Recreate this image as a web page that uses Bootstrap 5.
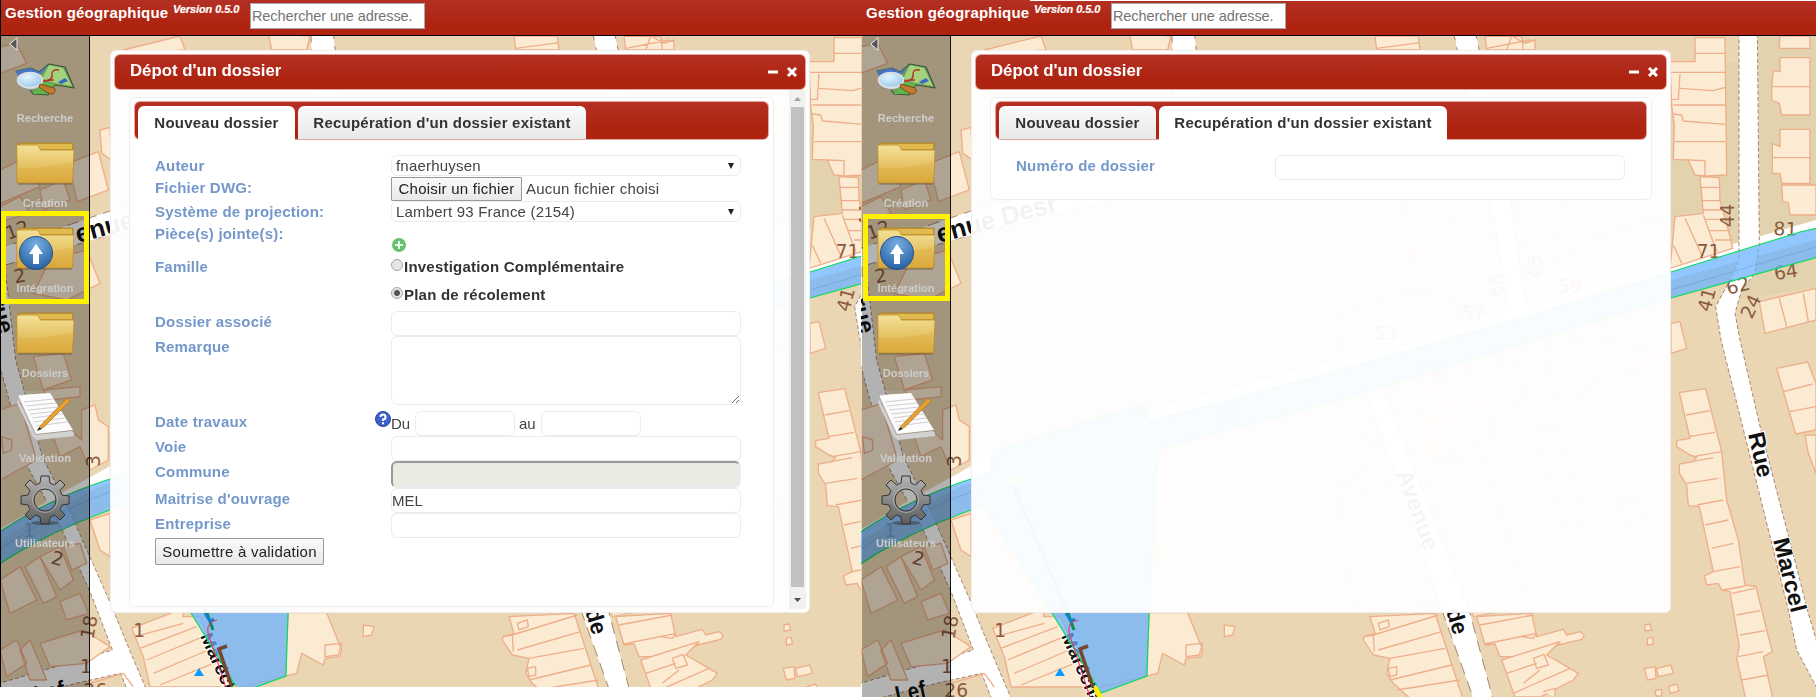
<!DOCTYPE html>
<html lang="fr">
<head>
<meta charset="utf-8">
<title>Gestion géographique</title>
<link rel="stylesheet" href="https://cdn.jsdelivr.net/npm/bootstrap@5.3.0/dist/css/bootstrap.min.css">
<style>
body{font-family:"Liberation Sans",Arial,sans-serif;font-size:15px;line-height:20px;color:#444;background:#fff;width:1816px;height:697px;overflow:hidden}
.pane{overflow:hidden;width:861px;height:687px;background:#ead6b2}
.pane-left{border-left:1px solid #000}
.pane-right{width:955px;height:697px}
.pane-left .maplayer{left:-1px}
.maplayer{top:0;left:0;z-index:0}
.topbar{height:36px;border-bottom:1px solid #000;background:linear-gradient(#b43024,#ae2410 70%);color:#fff;padding-left:4px;z-index:1}
.pane-right .topbar{padding-left:5px}
.whiteline{height:1px;top:0;left:169px;right:0;background:#fff}
.appname{font-weight:bold;font-size:15px;line-height:26px;width:168px;white-space:nowrap;letter-spacing:.21px}
.version{font-weight:bold;font-style:italic;font-size:11px;line-height:18px;width:77px;white-space:nowrap;letter-spacing:-.1px;-webkit-text-stroke:.2px #fff}
.addr{width:175px;height:26px;margin-top:3px;border:1px solid #a9a9a9;padding:0 1px;font-size:14.5px;letter-spacing:-.1px;background:#fff;outline:0}
.addr::placeholder{color:#757575}
.side{width:89px;border-right:1px solid #111;background:rgba(0,0,0,.3);margin-top:-1px;padding-top:2px}
.pane-right .side{margin-left:1px}
.tool{height:85px;text-align:center;color:#ccc;font-weight:bold;font-size:11px;line-height:14px}
.tool svg{display:block;margin:0 auto}
.caption{margin-top:10px}
.collapser{height:13px;padding-left:8px}
.marker{border:5px solid #fff200;left:0;width:88px;top:211px;height:93px;z-index:3}
.pane-right .marker{left:2px;width:87px;top:214px;height:87px}
.dlg{width:700px;height:563px;margin:14px 0 0 20px;border:1px solid #eee;border-radius:6px;background:rgba(255,255,255,.95);padding:3px}
.dlg-title{height:36px;border:1px solid #e0a7a0;border-radius:6px;background:linear-gradient(#b43024,#ae2410 70%);color:#fff;font-weight:bold;font-size:16.8px;padding:0 8px 0 15px}
.pane-left .dlg-card{width:645px;height:510px}
.dlg-card{margin:7px 0 0 15px;width:662px;height:103px;border:1px solid #eee;border-radius:6px;background:rgba(255,255,255,.97);padding:3px 4px}
.tabstrip{height:39px;border:1px solid #e0a7a0;border-radius:6px;background:linear-gradient(#b43024,#ae2410 70%);padding:4px 0 0 3px;gap:3px}
.tabitem{height:33px;border-radius:6px 6px 0 0;font-weight:bold;letter-spacing:.23px;line-height:33px;text-align:center;white-space:nowrap;background:linear-gradient(#fafafa,#e9e9e9);color:#333}
.tabitem.on{background:#fff;height:35px}
.t1{width:157px}.t2{width:288px}
.formarea{padding:15px 21px 0}
.line{display:flex}
.lab{width:236px;color:#7598ca;font-weight:bold;letter-spacing:.19px;line-height:21px;white-space:nowrap}
.fld{width:350px;height:25px;border:1px solid #ececec;border-radius:6px;background:#fff;padding:0;color:#444;line-height:23px;outline:0;display:block}
.pick{height:21px;line-height:20px;padding:0 5px 0 4px;display:flex;justify-content:space-between;letter-spacing:.2px}
.h22{height:22px}.h24{height:24px}.h25{height:25px}.h27{height:27px}.h32{height:32px}.h56{height:56px}.h75{height:75px}
.sysbtn{border:1px solid #999;background:linear-gradient(#fafafa,#e8e8e8);color:#222;padding:0;text-align:center;white-space:nowrap;border-radius:1px;letter-spacing:.24px}
.choice{height:28px;font-weight:bold;letter-spacing:.22px;line-height:24px;color:#333}
.dot{width:12px;height:12px;margin-right:1px;border:1px solid #a5a5a5;border-radius:50%;background:#e6e6e6;margin-top:4px}
.dot.sel{background:radial-gradient(#555 0 2.600px,#e6e6e6 3.400px)}
.off{height:27px;border:2px solid #ececec;border-top-color:#999;border-left-color:#999;background:#ebebe4}
.scroller{width:17px;height:519px;background:#f1f1f1;border-radius:0 0 4px 0}
.thumb{width:13px;height:480px;background:#c1c1c1}
.bd{fill:#fbebd3;stroke:#eeae8a;stroke-width:4;stroke-linejoin:round}
.gz{fill:#e2d3ae}
.rd{fill:#fff;stroke:#a78472;stroke-width:3;stroke-dasharray:12 7}
.num{fill:#8b5a40;font-size:56px;font-family:"DejaVu Sans",sans-serif}
.street{fill:#111;font-weight:bold;stroke:#fff;stroke-width:2;paint-order:stroke}
</style>
</head>
<body class="d-flex align-items-start">

<svg width="0" height="0" class="position-absolute">
<defs>
<linearGradient id="gold" x1="0" y1="0" x2="0" y2="1"><stop offset="0" stop-color="#f3e197"/><stop offset="1" stop-color="#dba93b"/></linearGradient>
<linearGradient id="steel" x1="0" y1="0" x2="0" y2="1"><stop offset="0" stop-color="#b5b5b5"/><stop offset="1" stop-color="#5c5c5c"/></linearGradient>
<radialGradient id="ball" cx=".5" cy=".25" r=".8"><stop offset="0" stop-color="#78b0e2"/><stop offset="1" stop-color="#215b9e"/></radialGradient>
<radialGradient id="lens" cx=".4" cy=".3" r=".8"><stop offset="0" stop-color="#e4f5ff"/><stop offset="1" stop-color="#8fc4e6"/></radialGradient>

<symbol id="i-folder" viewBox="0 0 58 44">
  <path d="M3 1h54v12H3z" fill="#c9992c" stroke="#a97e21" stroke-width=".7"/>
  <path d="M4 2h52v5H4z" fill="#e2bb50"/>
  <path d="M1 41 .8 3.500Q1 3 2 3H20q2 0 3 2l1.500 3H57q1 0 1 1L56.500 41z" fill="url(#gold)" stroke="#b98b2a" stroke-width=".8"/>
  <path d="M2 26q28 1 54-6l-.8 19H2.500z" fill="#d9a534" opacity=".3"/>
  <path d="M2 42h54" stroke="#3b3017" opacity=".5"/>
</symbol>
<symbol id="i-map" viewBox="0 0 60 34">
  <path d="M1 8 16 5 24 9 34 1 50 4 59 25 40 22 33 32 18 31 10 20z" fill="#6f9f54" stroke="#38563b" stroke-width="1.200" stroke-linejoin="round"/>
  <path d="M1 8 16 5 24 9 32 3 28 9 22 14 3 14z" fill="#4775c4"/>
  <path d="m34 2 14 3 9 18-17-3-13-4z" fill="#a3d17c"/>
  <path d="m18 31 8-13 14 3-7 10z" fill="#5cb649"/>
  <path d="M44 7q-8-1-7 5t-10 6 12-1" fill="none" stroke="#b73629" stroke-width="1.500"/>
  <path d="m43 19 7-4 3 3-7 3z" fill="#3c67c0"/>
  <path d="M3 18v4q12 9 23 1l1-5z" fill="#d7d7d7" stroke="#7b7b7b" stroke-width=".7"/>
  <ellipse cx="15" cy="17" rx="12.500" ry="7.500" fill="url(#lens)" stroke="#dedede" stroke-width="1.600"/>
  <path d="m25 21 14 4q3 3-1 6-4 1-14-7z" fill="#c17a2e" stroke="#693c12" stroke-width=".8"/>
</symbol>
<symbol id="i-note" viewBox="0 0 58 50">
  <path d="m2 8 17 36 37-4 2 2v3l-37 4-4-3L1 12z" fill="#d2d2d2"/>
  <path d="M2 4 34 2 57 39 20 43z" fill="#fcfcfc"/>
  <path d="m8 11 29-3M10 15l30-3M12 19l30-3M14 23l30-3M16 27l30-4M18 31l31-4M20 35l31-4" stroke="#cfcfd6" stroke-width="1"/>
  <path d="M3 5q-2-4 1-4t1 4m3-1q-2-4 1-4t1 4m3-1q-2-4 1-4t1 4m3-1q-2-4 1-4t1 4m3-1q-2-4 1-4t1 4m3-1q-2-4 1-4t1 4" fill="none" stroke="#aaa"/>
  <path d="m25 34 26-27 3 3-26 26-6 3z" fill="#e5a233" stroke="#b0731c" stroke-width=".7"/>
  <path d="m21 40 2-4 3 2z" fill="#333"/>
</symbol>
<symbol id="i-gear" viewBox="-25 -25 50 50">
  <ellipse cy="23" rx="14" ry="2" fill="#222" opacity=".4"/>
  <g fill="url(#steel)" stroke="#333" stroke-width="1">
    <path fill-rule="evenodd" d="M-4-24H4L5-17 9.500-15 15-20 20-15 15-9.500 17-5 24-4V4L17 5 15 9.500 20 15 15 20 9.500 15 5 17 4 24H-4L-5 17-9.500 15-15 20-20 15-15 9.500-17 5-24 4V-4L-17-5-15-9.500-20-15-15-20-9.500-15-5-17zM0-11A11 11 0 1 0 0 11 11 11 0 1 0 0-11z"/>
  </g>
  <circle r="12.500" fill="none" stroke="#c4c4c4" stroke-width="1" opacity=".6"/>
</symbol>
<symbol id="i-left" viewBox="0 0 9 14"><path d="M8 .8V13.200L.8 7z" fill="#555" stroke="#eee"/></symbol>

<symbol id="citymap" viewBox="0 0 955 697">
  <rect width="955" height="697" fill="#ead6b2"/>
  <!-- darker parcels -->
  <g transform="translate(479) scale(.33333)" class="gz">
    <path d="M960 108h240v80H990v500l150-40 60 120V108zM1250 108h178v600l-170 40zM1200 900l60-160 168-40v160z"/>
  </g>
  <!-- roads -->
  <path class="rd" style="stroke-width:1" d="M-5 250 110 211 300 160 420 120V147L300 187 110 235-5 268z"/>
  <path class="rd" style="stroke-width:1" d="M311 30h22l10 90-20 50h-10zM592 30h22l35 170 17 115h-16L629 200zM505 390h17l87 223 24 90H614l-32-90z"/>
  <g transform="translate(-1 300) scale(.33333)">
    <path class="rd" d="M-10-60 20-80 50 180 130 470 215 640 330 900 400 1070 460 1210H400L365 1120 230 1150 0 1210V1150L240 1080 340 1050 275 880 180 670 85 500 0 190z"/>
    <path d="M0 690 150 600 330 500 400 450 850 345 870 330 1440 180V225L300 560 0 720z" fill="#fff"/>
  </g>
  <path d="M479 360 660 306 810 262 955 220V240L810 280 479 378z" fill="#fff"/>
  <g transform="translate(479) scale(.33333)">
    <path class="rd" d="M1197 80H1252L1258 730 1245 820 1205 870 1185 940 1200 1020 1265 1300 1350 1625 1405 1840 1450 1990V2100L1370 1950 1345 1830 1143 1020 1127 920 1165 850 1197 780z"/>
  </g>

  <!-- buildings north-west -->
  <g transform="scale(.33333)" class="bd">
    <path d="M0 140 50 130 80 190 0 220zM370 150 540 108 555 150 380 160zM805 100 930 108 920 150H815zM0 510 80 470 120 560 0 610zM300 390 330 382 335 480 305 460zM205 490 295 455 325 570 232 605zM0 620 60 590 90 640 0 665zM120 570 190 540 210 600 130 630zM100 880 150 780 260 750 300 850 200 900z"/>
  </g>
  <!-- west blocks -->
  <g transform="translate(0 280) scale(.33333)" class="bd">
    <path d="M0 390 60 370 110 540 0 600zM100 230 190 220 215 300 130 330zM130 330 240 320V350L150 360zM245 390 285 375 295 420 325 440V540L270 570 240 500 180 530 160 470 210 450 245 480zM5 470 35 480V510L10 520z"/>
    <path d="M270 720 330 700V830L300 810zM0 900 60 860 110 960 30 1000zM75 860 120 830 170 950 130 970zM120 830 180 800 220 900 180 930zM190 800 240 790 260 850 215 870zM180 965 240 940 265 1000 200 1020zM0 1110 50 1080 80 1150 20 1190zM60 1110 90 1080 140 1200 90 1200zM120 1090 250 1050 330 1100 260 1150 150 1160z"/>
    <path d="M395 1045 550 985 548 1010 600 1010 640 1110 690 1221H450L430 1130z"/>
    <path d="M405 1070 550 1030M420 1105 590 1040M440 1140 610 1070M460 1180 625 1110M480 1215 640 1150M270 1210 370 1180 400 1221" fill="none"/>
    <path d="M865 998H980L1025 1110 1020 1130 975 1135 970 1155 905 1120 890 1180 720 1221 855 1190zM1090 1035 1122 1040 1115 1065 1090 1070zM975 1095 1025 1090 1015 1125 975 1130z"/>
  </g>
  <!-- north edge -->
  <g transform="translate(479) scale(.33333)" class="bd">
    <path d="M105 108H235L240 150H110zM435 108 545 110 550 150 440 150zM515 108 555 130 585 120V150H500zM110 145 240 128M440 145 570 120"/>
    <path d="M200 620 330 600 340 650 220 670zM530 620 660 600 640 700 550 720zM220 750 270 745 275 780 225 785zM580 920 570 830 780 720 950 660 990 740 990 830zM0 960 90 920 230 880 330 900 370 980 20 1080z" opacity=".7"/>
    <!-- terrace next to the north-south street -->
    <path d="M1065 113H1155L1160 525 1100 528 1065 525 1045 480 1000 478 1003 375 995 315 990 185 1065 185zM1080 530 1138 533 1140 600 1165 690 1178 745 990 805 1005 650 1090 640z"/>
    <path d="M1065 160H1155M990 217H1155M1020 222 1015 298H990M1020 265 1120 272 1155 262M1000 315H1155M1000 342 1025 345 1030 363 1155 373M1005 425H1155M1045 480 1095 482V528M1080 562H1140M1085 602H1140M1090 630H1145M1095 658H1155M1110 692H1170M1125 720H1178M1035 655 1085 765M1000 735 1025 790M1090 645 1130 755" fill="none"/>
    <path d="M1320 108H1410V145H1318zM1320 173H1410V345H1325L1318 310 1295 300V265L1300 212 1320 215zM1320 388H1410V550H1325L1320 520 1297 520V430L1320 440zM1325 555H1428V645H1350L1345 608 1328 605zM1298 260H1410M1298 473H1410"/>
    <path d="M1258 905 1428 865V960L1275 1000zM1318 895 1340 980M1390 880 1405 965M993 970 1020 965 1040 1045 993 1060z"/>
  </g>
  <!-- south-east and centre -->
  <g transform="translate(479 340) scale(.33333)" class="bd">
    <path d="M1018 158 1097 146 1145 335 1160 480 1195 600 1215 735 1248 740 1280 870 1297 935 1270 950 1300 1080H1218L1190 955 1198 920 1170 755 1145 750 1135 730 1100 735 1093 708 1120 695 1078 500 1045 497 1040 435 1018 400V372L1060 365 1070 352 1050 345 1010 320V302L1050 295z"/>
    <path d="M1038 225 1110 212M1048 290 1125 277M1060 350 1145 335M1055 365 1120 353M1040 430 1135 415M1070 495 1150 480M1095 555 1165 540M1115 625 1180 610M1120 695 1200 680M1150 750 1215 738M1175 760 1245 745M1190 825 1260 812M1200 885 1275 872M1195 950 1270 935M1205 1020 1285 1005" fill="none"/>
    <path d="M1310 85 1403 66 1428 130V270L1367 282zM1330 155 1418 132M1348 215 1428 200M1395 285H1428V400L1405 340z"/>
    <path d="M620 30 760 0 990 60 770 110 700 170 660 165zM230 150 520 70 550 170 430 240 450 290 290 340zM190 240 260 220 300 350 200 330zM320 190 400 170 410 230 340 250zM595 280 640 265 730 540 680 550zM845 490 890 480 900 530 860 540zM0 310 80 300 100 350 0 440zM10 490 180 430 270 780 60 810 20 640zM260 380 420 360 560 800 400 830z" opacity=".7"/>
    <path d="M90 830 285 820 370 1080H215L160 1030 140 1000 150 955 100 945 70 900 72 890 105 880z"/>
    <path d="M100 885 295 825M115 930 305 875M150 955 315 925M150 1020 335 975M170 1050 360 1020M115 850 145 840 148 860 120 870zM75 890 100 885 103 935M145 985 170 980V1005L150 1010z" fill="none"/>
    <path d="M410 830 575 820 590 890 670 868 680 885 720 875 733 885 725 898 655 915 525 950 480 950 465 912 435 915z"/>
    <path d="M420 855 580 825M435 912 590 880 580 895 545 890M485 960 660 905 620 945 690 985 715 1000 700 1020 600 1071H525z"/>
    <path d="M580 955 612 943 625 975 590 985zM500 1000 590 970M520 1060 690 985M550 1030 600 990M610 1055 645 1045V1071"/>
    <path d="M915 855 930 852 935 870 915 873zM922 895 937 892 940 912 922 915zM913 985 945 980 948 1015 922 1020zM950 985 992 975 1000 1000 955 1010zM985 1040 1010 1032 1017 1052 992 1060zM945 1052 965 1048V1068H948z"/>
  </g>

  <!-- house numbers and street names -->
  <g class="num" transform="scale(.33333)">
    <text transform="translate(25 720) rotate(-20)">12</text><text transform="translate(45 850) rotate(-10)">2</text>
    <text transform="translate(300 1400) rotate(-90)">3</text><text transform="translate(70 1610)">1</text><text transform="translate(150 1690) rotate(15)">2</text>
    <text transform="translate(280 1920) rotate(-80)">18</text><text transform="translate(240 2020)">1</text><text transform="translate(400 1910)">1</text><text transform="translate(250 2090)">26</text>
  </g>
  <g class="num" transform="translate(479) scale(.33333)">
    <text transform="translate(1182 682) rotate(-90)">44</text><text x="1300" y="705" transform="rotate(2 1300 705)">81</text><text x="1070" y="775">71</text>
    <text transform="translate(1305 840) rotate(-8)">64</text><text transform="translate(1165 885) rotate(-15)">62</text><text transform="translate(1110 938) rotate(-75)">41</text><text transform="translate(1235 960) rotate(-65)">24</text>
    <g opacity=".8"><text x="655" y="880">59</text><text x="365" y="960">57</text><text transform="translate(100 1020)">53</text><text transform="translate(490 890) rotate(-90)">68</text><text transform="translate(605 835) rotate(-90)">65</text><text x="230" y="1125">51</text><text transform="translate(-370 1275) rotate(-12)">25</text></g>
  </g>
  <text class="street" font-size="26" transform="translate(78 243) rotate(-15)" textLength="124" lengthAdjust="spacingAndGlyphs">enue Desr</text>
  <g class="street" font-size="23">
    <text transform="translate(535 473) rotate(70)" opacity=".8" textLength="84" lengthAdjust="spacingAndGlyphs">Avenue</text>
    <text transform="translate(585 611) rotate(73)" textLength="26" lengthAdjust="spacingAndGlyphs">de</text>
    <text transform="translate(887 434) rotate(77)" textLength="46" lengthAdjust="spacingAndGlyphs">Rue</text>
    <text transform="translate(912 540) rotate(76)" textLength="76" lengthAdjust="spacingAndGlyphs">Marcel</text>
    <text transform="translate(200 636) rotate(66)" textLength="82" lengthAdjust="spacingAndGlyphs" font-size="18">Maréchal</text>
    <text transform="translate(36 703) rotate(-12)" font-size="24" textLength="31" lengthAdjust="spacingAndGlyphs">Lef</text>
    <text transform="translate(-10 300) rotate(75)">rue</text>
  </g>

  <!-- project area -->
  <path d="M-2 533Q50 498 110 479L131 471V452L281 404 289 421 479 370 660 318 810 272 939 232 957 228V257L810 298 479 400 297 449 288 613 286 676 240 693 191 613 127 513 127 504Q50 530-2 565z" fill="#6bb2ff" fill-opacity=".74" stroke="#0bdc5c" stroke-width="1.200"/>
  <path d="M0 549Q60 508 118 489M810 290 955 247" stroke="#5b8fce" stroke-opacity=".4" fill="none"/>
  <path d="M143 484 163 478" stroke="#ffe93b" stroke-width="3"/>
  <path d="M152 486 207 613 213 630" stroke="#0b8c57" stroke-width="3" fill="none"/>
  <path d="M205 613 210 621 214 619" stroke="#0c83c9" stroke-width="3" fill="none"/>
  <path d="M217 620Q206 622 208 633L230 700" stroke="#f0285e" fill="none"/>
  <path d="M227 646 219 649 232 687" stroke="#76472c" stroke-width="3.500" fill="none"/>
  <path d="m234 687 6 12" stroke="#ffef00" stroke-width="5"/>
  <path d="m199 668 5 8H194z" fill="#0b9bff"/>
</symbol>
</defs>
</svg>

<!-- new file tab -->
<section class="pane pane-left position-relative flex-shrink-0">
  <svg class="maplayer position-absolute" width="955" height="697"><use href="#citymap"/></svg>
  <header class="topbar position-relative d-flex align-items-start">
    <div class="appname">Gestion géographique</div><div class="version">Version 0.5.0</div>
    <input class="addr" placeholder="Rechercher une adresse.">
  </header>
  <div class="d-flex position-relative h-100 align-items-start">
    <nav class="side h-100 flex-shrink-0">
      <div class="collapser"><svg class="d-block" width="9" height="14"><use href="#i-left"/></svg></div>
      <div class="tool" style="padding-top:13px"><svg width="60" height="34"><use href="#i-map"/></svg><div style="margin-top:14px">Recherche</div></div>
      <div class="tool" style="padding-top:7px"><svg width="58" height="44"><use href="#i-folder"/></svg><div class="caption">Création</div></div>
      <div class="tool" style="padding-top:7px"><svg width="58" height="44"><use href="#i-folder"/><circle cx="20" cy="26" r="16.500" fill="url(#ball)" stroke="#24528b"/><path d="m20 17 7 10h-4v10h-6V27h-4z" fill="#fff"/></svg><div class="caption">Intégration</div></div>
      <div class="tool" style="padding-top:7px"><svg width="58" height="44"><use href="#i-folder"/></svg><div class="caption">Dossiers</div></div>
      <div class="tool" style="padding-top:1px"><svg width="58" height="50"><use href="#i-note"/></svg><div class="caption">Validation</div></div>
      <div class="tool"><svg width="50" height="50"><use href="#i-gear"/></svg><div style="margin-top:11px">Utilisateurs</div></div>
    </nav>
    <main class="dlg">
      <div class="dlg-title d-flex align-items-center justify-content-between"><span style="margin-top:-2px">Dépot d'un dossier</span><svg width="29" height="10"><path d="M0 5h10" stroke="#fff" stroke-width="3"/><path d="m20 1 8 8m0-8-8 8" stroke="#fff" stroke-width="3"/></svg></div>
      <div class="d-flex justify-content-between">
        <div class="dlg-card">
          <div class="tabstrip d-flex"><div class="tabitem on t1">Nouveau dossier</div><div class="tabitem t2">Recupération d'un dossier existant</div></div>
          <form class="formarea">
            <div class="line h22"><label class="lab">Auteur</label><div class="fld pick"><span>fnaerhuysen</span><svg width="8" height="20"><path d="M1 7h6l-3 6z" fill="#222"/></svg></div></div>
            <div class="line h24"><label class="lab">Fichier DWG:</label><button type="button" class="sysbtn" style="width:131px;height:24px">Choisir un fichier</button><span class="ms-1" style="line-height:24px;letter-spacing:.2px">Aucun fichier choisi</span></div>
            <div class="line h22"><label class="lab">Système de projection:</label><div class="fld pick"><span>Lambert 93 France (2154)</span><svg width="8" height="20"><path d="M1 7h6l-3 6z" fill="#222"/></svg></div></div>
            <div class="line h32"><label class="lab">Pièce(s) jointe(s):</label><svg width="16" height="16" style="margin-top:14px"><circle cx="8" cy="8" r="7" fill="#66c06f"/><path d="M8 4v8M4 8h8" stroke="#e9f8ea" stroke-width="2"/></svg></div>
            <div class="line h56"><label class="lab" style="line-height:23px">Famille</label><div><div class="choice d-flex"><span class="dot"></span>Investigation Complémentaire</div><div class="choice d-flex"><span class="dot sel"></span>Plan de récolement</div></div></div>
            <div class="line h25"><label class="lab">Dossier associé</label><input class="fld"></div>
            <div class="line h75"><label class="lab">Remarque</label><textarea class="fld" style="height:69px"></textarea></div>
            <div class="line h25"><label class="lab" style="width:220px">Date travaux</label><svg width="16" height="16"><circle cx="8" cy="8" r="7.500" fill="#3d61cd" stroke="#2743a0"/><path d="M5.500 6Q5.500 3.500 8 3.500T10.500 6 8 8.500V10M8 11.200v2" fill="none" stroke="#fff" stroke-width="2"/></svg><span style="width:24px;line-height:26px">Du</span><input class="fld" style="width:100px"><span style="width:26px;padding-left:4px;line-height:26px">au</span><input class="fld" style="width:100px"></div>
            <div class="line h25"><label class="lab">Voie</label><input class="fld"></div>
            <div class="line h27"><label class="lab">Commune</label><input class="fld off" disabled></div>
            <div class="line h25"><label class="lab">Maitrise d'ouvrage</label><input class="fld" value="MEL"></div>
            <div class="line h25"><label class="lab">Entreprise</label><input class="fld"></div>
            <button type="button" class="sysbtn d-block" style="width:169px;height:27px">Soumettre à validation</button>
          </form>
        </div>
        <div class="scroller d-flex flex-column align-items-center justify-content-between"><svg width="17" height="17"><path d="M5 11h7L8.500 7z" fill="#a3a3a3"/></svg><div class="thumb"></div><svg width="17" height="22"><path d="M5 11h7l-3.500 4z" fill="#505050"/></svg></div>
      </div>
    </main>
  </div>
  <div class="marker position-absolute"></div>
</section>

<!-- existing file tab -->
<section class="pane pane-right position-relative flex-shrink-0">
  <svg class="maplayer position-absolute" width="955" height="697"><use href="#citymap"/></svg>
  <header class="topbar position-relative d-flex align-items-start">
    <div class="whiteline position-absolute"></div>
    <div class="appname">Gestion géographique</div><div class="version">Version 0.5.0</div>
    <input class="addr" placeholder="Rechercher une adresse.">
  </header>
  <div class="d-flex position-relative h-100 align-items-start">
    <nav class="side h-100 flex-shrink-0">
      <div class="collapser"><svg class="d-block" width="9" height="14"><use href="#i-left"/></svg></div>
      <div class="tool" style="padding-top:13px"><svg width="60" height="34"><use href="#i-map"/></svg><div style="margin-top:14px">Recherche</div></div>
      <div class="tool" style="padding-top:7px"><svg width="58" height="44"><use href="#i-folder"/></svg><div class="caption">Création</div></div>
      <div class="tool" style="padding-top:7px"><svg width="58" height="44"><use href="#i-folder"/><circle cx="20" cy="26" r="16.500" fill="url(#ball)" stroke="#24528b"/><path d="m20 17 7 10h-4v10h-6V27h-4z" fill="#fff"/></svg><div class="caption">Intégration</div></div>
      <div class="tool" style="padding-top:7px"><svg width="58" height="44"><use href="#i-folder"/></svg><div class="caption">Dossiers</div></div>
      <div class="tool" style="padding-top:1px"><svg width="58" height="50"><use href="#i-note"/></svg><div class="caption">Validation</div></div>
      <div class="tool"><svg width="50" height="50"><use href="#i-gear"/></svg><div style="margin-top:11px">Utilisateurs</div></div>
    </nav>
    <main class="dlg">
      <div class="dlg-title d-flex align-items-center justify-content-between"><span style="margin-top:-2px">Dépot d'un dossier</span><svg width="29" height="10"><path d="M0 5h10" stroke="#fff" stroke-width="3"/><path d="m20 1 8 8m0-8-8 8" stroke="#fff" stroke-width="3"/></svg></div>
      <div class="dlg-card">
        <div class="tabstrip d-flex"><div class="tabitem t1">Nouveau dossier</div><div class="tabitem on t2">Recupération d'un dossier existant</div></div>
        <form class="formarea"><div class="line h25"><label class="lab" style="width:259px">Numéro de dossier</label><input class="fld"></div></form>
      </div>
    </main>
  </div>
  <div class="marker position-absolute"></div>
</section>
<script src="https://cdn.jsdelivr.net/npm/bootstrap@5.3.0/dist/js/bootstrap.bundle.min.js"></script>
</body>
</html>
